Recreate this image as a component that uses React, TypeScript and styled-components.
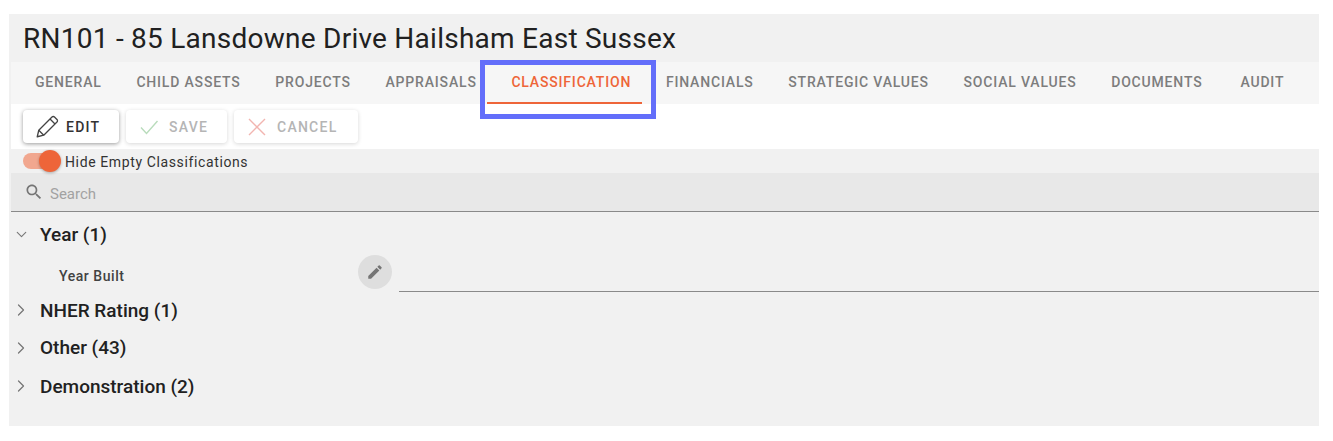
import React from "react";
import styled, { createGlobalStyle } from "styled-components";
import { ChevronDown, ChevronRight } from "lucide-react";

const GlobalStyle = createGlobalStyle`
  html, body {
    margin: 0;
    background: #fff;
    font-family: Roboto, "Liberation Sans", sans-serif;
  }
`;

const Page = styled.div`
  position: relative;
  width: 1333px;
  height: 441px;
  padding: 14px 14px 15px 9px;
  box-sizing: border-box;
  overflow: hidden;
`;

const Panel = styled.div`
  display: flex;
  flex-direction: column;
  height: 100%;
  background: #f1f1f1;
`;

const Title = styled.h1`
  margin: 0;
  height: 48px;
  padding-left: 14px;
  font-size: 28px;
  font-weight: 400;
  line-height: 50px;
  letter-spacing: 0.25px;
  color: #212121;
  white-space: nowrap;
`;

const TabBar = styled.div`
  display: flex;
  height: 42px;
  margin-left: 2px;
  padding-left: 24px;
  background: #f6f6f6;
`;

const Tab = styled.div<{ $active?: boolean; $gap?: number }>`
  position: relative;
  margin-right: ${(p) => p.$gap ?? 34.7}px;
  font-size: 14px;
  font-weight: 500;
  line-height: 41px;
  letter-spacing: 0.82px;
  text-transform: uppercase;
  white-space: nowrap;
  color: ${(p) => (p.$active ? "#ee6539" : "#7d7d7d")};

  ${(p) =>
    p.$active &&
    `
    &::after {
      content: "";
      position: absolute;
      left: -24px;
      right: -11px;
      bottom: 0;
      height: 2px;
      background: #ee6539;
    }
  `}
`;

const Toolbar = styled.div`
  display: flex;
  align-items: flex-start;
  gap: 7px;
  height: 45px;
  margin-left: 2px;
  padding: 6px 0 0 12px;
  box-sizing: border-box;
  background: #fff;
`;

const ActionButton = styled.div<{
  $disabled?: boolean;
  $width: number;
  $pad: number;
  $gap: number;
}>`
  display: flex;
  align-items: center;
  gap: ${(p) => p.$gap}px;
  width: ${(p) => p.$width}px;
  height: 33px;
  padding-left: ${(p) => p.$pad}px;
  box-sizing: border-box;
  border-radius: 4px;
  background: #fff;
  font-size: 14px;
  font-weight: 500;
  letter-spacing: 1.25px;
  color: ${(p) => (p.$disabled ? "#b5b5b5" : "#333")};
  box-shadow: ${(p) =>
    p.$disabled
      ? "0 1px 4px rgba(0, 0, 0, 0.16)"
      : "0 1px 4px rgba(0, 0, 0, 0.4)"};
`;

const ToggleRow = styled.div`
  display: flex;
  align-items: center;
  height: 24px;
  margin-left: 2px;
  padding-left: 12px;
  font-size: 14px;
  letter-spacing: 0.62px;
  color: #333;
`;

const ToggleLabel = styled.span`
  padding-top: 2px;
`;

const ToggleTrack = styled.div`
  position: relative;
  width: 34px;
  height: 16px;
  margin-right: 8px;
  border-radius: 8px;
  background: #f1a78f;
`;

const ToggleThumb = styled.div`
  position: absolute;
  top: -3px;
  right: -4px;
  width: 22px;
  height: 22px;
  border-radius: 50%;
  background: #ee6539;
  box-shadow: 0 1px 3px rgba(0, 0, 0, 0.3);
`;

const SearchBar = styled.div`
  display: flex;
  align-items: center;
  gap: 6px;
  height: 39px;
  margin-left: 2px;
  padding-left: 13px;
  box-sizing: border-box;
  background: #e8e8e8;
  border-bottom: 1px solid #8a8a8a;
  font-size: 15px;
  color: #a2a2a2;
`;

const SearchText = styled.span`
  padding-top: 4px;
`;

const TreeList = styled.div`
  display: flex;
  flex-direction: column;
  padding-top: 3px;
`;

const GroupHeader = styled.div<{ $height: number }>`
  display: flex;
  align-items: center;
  height: ${(p) => p.$height}px;
  padding-left: 2px;
  font-size: 19px;
  font-weight: 500;
  color: #212121;
`;

const ChevronSlot = styled.div`
  display: flex;
  justify-content: center;
  width: 20px;
  margin-right: 9px;
  color: #777;
`;

const FieldRow = styled.div`
  display: flex;
  align-items: center;
  height: 39px;
  padding-left: 50px;
  font-size: 14px;
  font-weight: 500;
  letter-spacing: 0.55px;
  color: #424242;
`;

const FieldLabel = styled.div`
  width: 299px;
  padding-top: 7px;
`;

const EditRound = styled.div`
  display: flex;
  align-items: center;
  justify-content: center;
  width: 34px;
  height: 34px;
  margin-top: -1px;
  border-radius: 50%;
  background: #dedede;
  color: #757575;
`;

const FieldInput = styled.div`
  flex: 1;
  align-self: flex-end;
  height: 18px;
  margin-left: 7px;
  border-bottom: 1px solid #8a8a8a;
`;

const Highlight = styled.div`
  position: absolute;
  left: 480px;
  top: 60px;
  width: 176px;
  height: 59px;
  box-sizing: border-box;
  border: 5px solid #636efa;
`;

const tabs = [
  "General",
  "Child Assets",
  "Projects",
  "Appraisals",
  "Classification",
  "Financials",
  "Strategic Values",
  "Social Values",
  "Documents",
  "Audit",
];

const groups = [
  { name: "NHER Rating (1)", height: 36 },
  { name: "Other (43)", height: 39 },
  { name: "Demonstration (2)", height: 38 },
];

const App = () => (
  <Page>
    <GlobalStyle />
    <Panel>
      <Title>RN101 - 85 Lansdowne Drive Hailsham East Sussex</Title>
      <TabBar>
        {tabs.map((t) => (
          <Tab
            key={t}
            $active={t === "Classification"}
            $gap={t === "Documents" ? 38 : undefined}
          >
            {t}
          </Tab>
        ))}
      </TabBar>
      <Toolbar>
        <ActionButton $width={96} $pad={11} $gap={6}>
          <svg width="26" height="26" viewBox="0 0 24 24" fill="none" stroke="#444" strokeWidth="1.2" strokeLinejoin="round">
            <path d="M3 21l1.4-6L16.6 2.8a1.6 1.6 0 0 1 2.3 0l2.3 2.3a1.6 1.6 0 0 1 0 2.3L9 19.6z" />
            <path d="M4.4 15L9 19.6M14.8 4.6l4.6 4.6" />
          </svg>
          EDIT
        </ActionButton>
        <ActionButton $width={101} $pad={13} $gap={10} $disabled>
          <svg width="20" height="20" viewBox="0 0 20 20" fill="none" stroke="#b9dcbc" strokeWidth="1.4">
            <path d="M2 10.5l5.5 6L18.5 4" />
          </svg>
          SAVE
        </ActionButton>
        <ActionButton $width={124} $pad={13} $gap={10} $disabled>
          <svg width="20" height="20" viewBox="0 0 20 20" fill="none" stroke="#f2b5b0" strokeWidth="1.4">
            <path d="M2 2l16 16M18 2L2 18" />
          </svg>
          CANCEL
        </ActionButton>
      </Toolbar>
      <ToggleRow>
        <ToggleTrack>
          <ToggleThumb />
        </ToggleTrack>
        <ToggleLabel>Hide Empty Classifications</ToggleLabel>
      </ToggleRow>
      <SearchBar>
        <svg width="20" height="20" viewBox="0 0 24 24" fill="#757575">
          <path d="M15.5 14h-.79l-.28-.27C15.41 12.59 16 11.11 16 9.5 16 5.91 13.09 3 9.5 3S3 5.91 3 9.5 5.91 16 9.5 16c1.61 0 3.09-.59 4.23-1.57l.27.28v.79l5 4.99L20.49 19l-4.99-5zm-6 0C7.01 14 5 11.99 5 9.5S7.01 5 9.5 5 14 7.01 14 9.5 11.99 14 9.5 14z" />
        </svg>
        <SearchText>Search</SearchText>
      </SearchBar>
      <TreeList>
        <GroupHeader $height={38}>
          <ChevronSlot>
            <ChevronDown size={17} strokeWidth={1.6} />
          </ChevronSlot>
          Year (1)
        </GroupHeader>
        <FieldRow>
          <FieldLabel>Year Built</FieldLabel>
          <EditRound>
            <svg width="18" height="18" viewBox="0 0 24 24" fill="#757575">
              <path d="M3 17.25V21h3.75L17.81 9.94l-3.75-3.75L3 17.25zM20.71 7.04a1 1 0 0 0 0-1.41l-2.34-2.34a1 1 0 0 0-1.41 0l-1.83 1.83 3.75 3.75 1.83-1.83z" />
            </svg>
          </EditRound>
          <FieldInput />
        </FieldRow>
        {groups.map((g) => (
          <GroupHeader key={g.name} $height={g.height}>
            <ChevronSlot>
              <ChevronRight size={20} strokeWidth={1.5} />
            </ChevronSlot>
            {g.name}
          </GroupHeader>
        ))}
      </TreeList>
    </Panel>
    <Highlight />
  </Page>
);

export default App;
